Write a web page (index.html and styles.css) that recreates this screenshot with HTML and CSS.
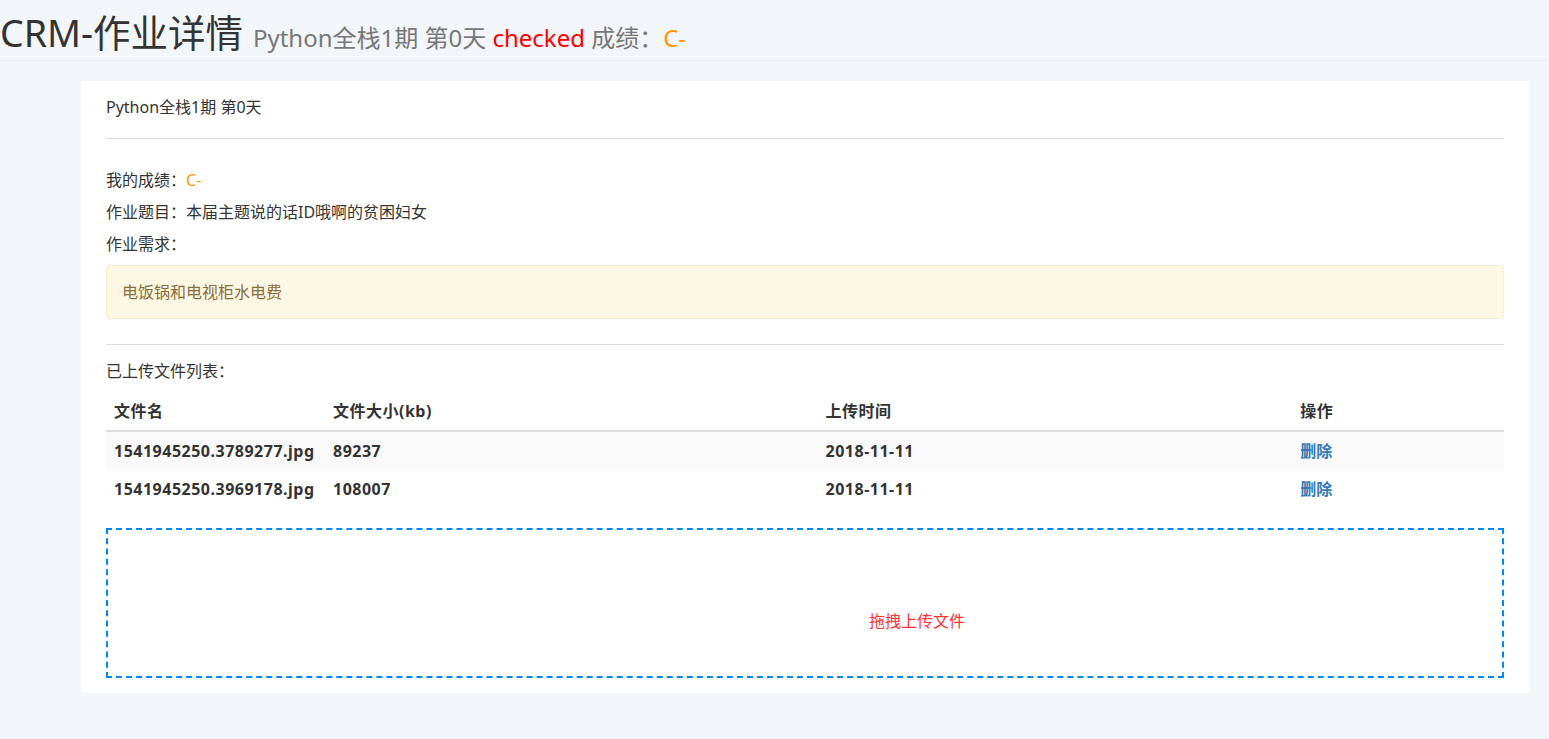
FILE: index.html
```html
<!DOCTYPE html>
<html lang="zh-CN">
<head>
<meta charset="utf-8">
<title>CRM-作业详情</title>
<link rel="stylesheet" href="styles.css">
</head>
<body>
<header class="page-header">
  <h1 class="page-title">CRM-作业详情 <small class="subtitle">Python全栈1期 第0天 <span class="status">checked</span> 成绩：<span class="grade">C-</span></small></h1>
</header>
<main class="content">
  <section class="panel">
    <div class="panel-title">Python全栈1期 第0天</div>
    <hr class="divider first">
    <div class="info">
      <p class="info-line">我的成绩：<span class="grade">C-</span></p>
      <p class="info-line">作业题目：本届主题说的话ID哦啊的贫困妇女</p>
      <p class="info-line">作业需求：</p>
    </div>
    <div class="alert">电饭锅和电视柜水电费</div>
    <hr class="divider second">
    <p class="list-label">已上传文件列表：</p>
    <table class="file-table">
      <thead>
        <tr>
          <th class="col-name">文件名</th>
          <th class="col-size">文件大小(kb)</th>
          <th class="col-time">上传时间</th>
          <th class="col-op">操作</th>
        </tr>
      </thead>
      <tbody>
        <tr>
          <td>1541945250.3789277.jpg</td>
          <td>89237</td>
          <td>2018-11-11</td>
          <td><a class="del-link" href="#">删除</a></td>
        </tr>
        <tr>
          <td>1541945250.3969178.jpg</td>
          <td>108007</td>
          <td>2018-11-11</td>
          <td><a class="del-link" href="#">删除</a></td>
        </tr>
      </tbody>
    </table>
    <div class="dropzone">
      <div class="dz-message">拖拽上传文件</div>
    </div>
  </section>
</main>
</body>
</html>
```

FILE: styles.css
```css
* { box-sizing: border-box; }
html, body {
  margin: 0;
  padding: 0;
}
body {
  background: #f3f6f9;
  font-family: "Noto Sans", "Noto Sans CJK SC", sans-serif;
  font-size: 16px;
  line-height: 20px;
  color: #333;
}
.page-header {
  height: 61px;
  padding-top: 13px;
  border-bottom: 1px solid #e6e9ec;
}
.page-title {
  margin: 0;
  font-size: 37.5px;
  line-height: 40px;
  font-weight: 400;
  color: #333;
  white-space: nowrap;
}
.subtitle {
  font-size: 24px;
  color: #777;
  font-weight: 400;
}
.status { color: #f00; }
.grade { color: #ff9900; }

.content {
  padding: 20px 20px 0 81px;
}
.panel {
  background: #fff;
  padding: 16px 25px 15px;
}
.panel-title {
  line-height: 20px;
}
.divider {
  border: 0;
  border-top: 1px solid #dddddd;
  margin: 0;
}
.divider.first { margin-top: 21px; }
.info { padding-top: 31px; }
.info-line {
  margin: 0 0 12px;
}
.info-line:last-child { margin-bottom: 0; }
.alert {
  margin-top: 11px;
  padding: 15px;
  line-height: 22px;
  background: #fcf8e3;
  border: 1px solid #faebcc;
  border-radius: 4px;
  color: #8a6d3b;
}
.divider.second { margin-top: 25px; }
.list-label {
  margin: 16px 0 12px;
}
.file-table {
  width: 100%;
  border-collapse: collapse;
  border-spacing: 0;
  margin-bottom: 20px;
}
.file-table th,
.file-table td {
  text-align: left;
  padding: 8px;
  font-weight: 700;
  vertical-align: middle;
  letter-spacing: 0.5px;
}
.file-table th {
  line-height: 21px;
  border-bottom: 2px solid #dddddd;
}
.file-table td {
  line-height: 22px;
}
.file-table tbody tr:nth-child(odd) { background: #f9f9f9; }
.col-name { width: 219px; }
.col-size { width: 493px; }
.col-time { width: 475px; }
.col-op { width: 212px; }
.del-link {
  color: #337ab7;
  text-decoration: none;
  letter-spacing: 0;
}
.dropzone {
  height: 150px;
  border: 2px dashed #0087f7;
  padding-top: 80px;
  text-align: center;
}
.dz-message {
  color: #ff3333;
  line-height: 20px;
  padding-left: 224px;
  font-family: "Noto Sans CJK SC", sans-serif;
}
```
